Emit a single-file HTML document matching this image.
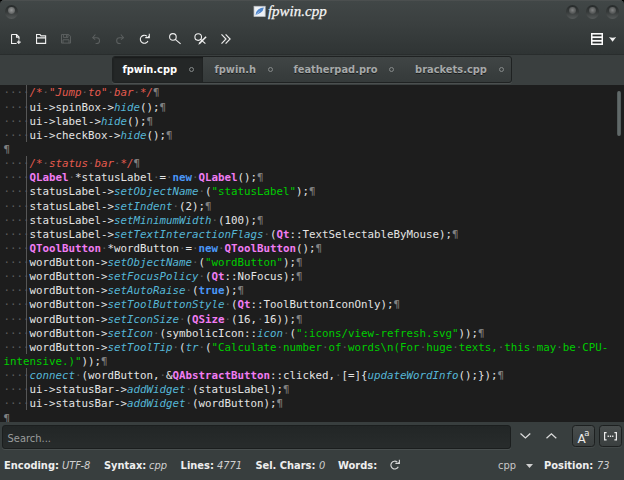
<!DOCTYPE html>
<html><head><meta charset="utf-8"><title>fpwin.cpp</title>
<style>
html,body{margin:0;padding:0;background:#000;}
body{width:624px;height:480px;position:relative;overflow:hidden;font-family:"DejaVu Sans","Liberation Sans",sans-serif;}
#win{position:absolute;left:0;top:0;width:624px;height:480px;border-radius:4.5px 4.5px 0 0;overflow:hidden;background:#383e3e;}
#head{position:absolute;left:0;top:0;width:624px;height:54.8px;background:linear-gradient(#414747 0px,#3b4040 22px,#2f3434 54.8px);}
#head:before{content:"";position:absolute;left:0;top:0;right:0;height:1px;background:#4b4f4f;}
#title{position:absolute;left:267.9px;top:2.6px;font-family:"Liberation Serif","DejaVu Serif",serif;font-style:italic;font-size:15px;color:#f6f6f6;line-height:16px;white-space:nowrap;-webkit-text-stroke:0.25px #f6f6f6;}
.wbtn{position:absolute;top:5px;width:13.4px;height:13.6px;border-radius:50%;background:linear-gradient(#292d2d 10%,#363a3a 50%,#565a5a 100%);}
.wbtn:after{content:"";position:absolute;left:3.3px;top:2.3px;width:6.8px;height:6.8px;border-radius:50%;background:radial-gradient(circle at 50% 45%,#969898 0,#747676 45%,#454949 100%);}
.wbtn.r:after{background:radial-gradient(circle at 50% 45%,#808282 0,#606262 45%,#3c4040 100%);}
#tabbar{position:absolute;left:0;top:54.4px;width:624px;height:30.8px;background:#3a3f3f;border-top:1px solid #292d2d;box-sizing:border-box;}
#tabs{position:absolute;left:111.9px;top:56px;width:400.6px;height:26.5px;background:linear-gradient(#404545,#353a3a);border-radius:3px;border:1px solid #1f2222;box-sizing:border-box;overflow:hidden;box-shadow:0 1px 0 rgba(255,255,255,0.085);}
.tab{position:absolute;top:-0.7px;height:26px;font-weight:bold;font-size:9.9px;line-height:27.4px;color:#a6a9a9;white-space:nowrap;text-shadow:0 1px 0.6px rgba(0,0,0,0.55);}
.tab.act{background:#242727;color:#fff;text-shadow:none;box-shadow:inset 0 1.5px 1.5px rgba(0,0,0,0.55);}
.dot{position:absolute;top:67.4px;width:3px;height:3px;border:1px solid #868a8a;border-radius:50%;}
#ed{position:absolute;left:0;top:85.2px;width:624px;height:336.4px;background:#1d1d1d;overflow:hidden;}
#code{position:absolute;left:3.4px;top:1.2px;margin:0;font-family:"DejaVu Sans Mono","Liberation Mono",monospace;font-size:10.8px;line-height:14.14px;color:#e4e4e4;white-space:pre;}
#code i{color:#55b6d6;}
#code .c{color:#e45a4e;font-style:italic;}
#code .t{color:#f17cf3;font-weight:bold;}
#code .k{color:#4a98f8;font-weight:bold;}
#code .s{color:#00cc00;}
#code .w{color:#5c5c5c;}
#code .p{color:#808080;}
.guide{position:absolute;left:26.1px;width:0.9px;background:#565656;}
#sb{position:absolute;left:616.8px;top:90.6px;width:4.2px;height:45.8px;background:linear-gradient(90deg,#4c5454,#687070 50%,#4c5454);border-radius:2.1px;}
#search{position:absolute;left:0;top:421.6px;width:624px;height:31px;background:#383e3e;}
#sin{position:absolute;left:1.6px;top:3.6px;width:509.8px;height:23.6px;box-sizing:border-box;border:1px solid #1b1e1e;border-radius:3px;background:linear-gradient(#222626,#282c2c);box-shadow:0 1px 0 rgba(255,255,255,0.09);font-size:9.9px;color:#9a9d9d;}
#sin span{position:absolute;left:5px;top:5.8px;line-height:14px;}
.sbtn{position:absolute;top:3.4px;height:22px;width:23.2px;box-sizing:border-box;border:1px solid #1d2020;border-radius:3.5px;background:linear-gradient(#484d4d,#3a3f3f);box-shadow:0 1px 0 rgba(255,255,255,0.06);}
#status{position:absolute;left:0;top:452px;width:624px;height:28px;background:#383e3e;font-size:9.9px;line-height:27.6px;color:#eee;white-space:nowrap;}
#status b{position:absolute;top:0;}
#status em{position:absolute;top:0;color:#d0d0d0;}
#status span{position:absolute;top:0;}
svg{position:absolute;overflow:visible;}
</style></head><body>
<div id="win">
<div id="head">
  <div class="wbtn" style="left:5px"></div>
  <div class="wbtn r" style="left:565.8px"></div>
  <div class="wbtn r" style="left:585.6px"></div>
  <div class="wbtn r" style="left:605.8px"></div>
  <svg style="left:254.4px;top:6.2px" width="11.2" height="10.8" viewBox="0 0 12 11"><rect x="0" y="0" width="12" height="11" fill="#eef1f5"/><rect x="0" y="0" width="12" height="11" fill="none" stroke="#b9bdc2" stroke-width="0.8"/><path d="M1.6 9.6 Q1.4 6 4.5 3.4 Q7.4 1.2 10.6 1.2 Q10 5 7 7 Q4.6 8.6 1.6 9.6Z" fill="#4f86cc"/><path d="M1.2 10 L6 5.4" stroke="#d9e4f2" stroke-width="0.6"/></svg>
  <div id="title">fpwin.cpp</div>
  <!-- toolbar icons -->
  <svg style="left:11px;top:34px" width="10" height="10" viewBox="0 0 10 10" fill="none" stroke="#f0f0f0" stroke-width="1.1"><path d="M0.55 0.55 H5.6 L8 3 V5.6 M0.55 0.55 V9.45 H5.6"/><path d="M5.5 0.6 V3.1 H8"/><path d="M7.8 6.2 V9.9 M5.9 8.05 H9.7" stroke-width="1.2"/></svg>
  <svg style="left:35.8px;top:34px" width="10.2" height="10" viewBox="0 0 10.2 10" fill="none" stroke="#f0f0f0" stroke-width="1.1"><path d="M0.55 9.4 V0.55 H4 L5 1.9 H9.65 V9.4 Z"/><path d="M0.55 3.9 H9.65"/></svg>
  <svg style="left:61px;top:34.2px" width="10" height="9.6" viewBox="0 0 10 9.6" fill="none" stroke="#5b5f5f" stroke-width="1"><path d="M0.5 0.5 H7.7 L9.5 2.3 V9.1 H0.5 Z"/><path d="M2.4 0.5 V3.4 H7 V0.5 M5.6 1 V3 M2 9 V5.8 H8 V9"/></svg>
  <svg style="left:92px;top:34px" width="8.2" height="10" viewBox="0 0 8.2 10" fill="none" stroke="#5b5f5f" stroke-width="1.05"><path d="M3.4 0.5 L0.7 3.7 L3.2 5.6"/><path d="M0.9 3.7 H4.6 A2.95 2.95 0 0 1 4.6 9.6 H3.6"/></svg>
  <svg style="left:116.2px;top:34px" width="8.2" height="10" viewBox="0 0 8.2 10" fill="none" stroke="#5b5f5f" stroke-width="1.05"><path d="M4.8 0.5 L7.5 3.7 L5 5.6"/><path d="M7.3 3.7 H3.6 A2.95 2.95 0 0 0 3.6 9.6 H4.6"/></svg>
  <svg style="left:140.4px;top:34px" width="10.4" height="10" viewBox="0 0 10.4 10" fill="none" stroke="#f0f0f0" stroke-width="1.1"><path d="M7.95 7 A4 4 0 1 1 6.9 2.25"/><path d="M9.3 -0.2 V3.6 H5.3" stroke-width="1.05"/><path d="M9.3 1.2 V3.6 H6.9 Z" fill="#f0f0f0" stroke="none"/></svg>
  <svg style="left:169px;top:33px" width="12" height="11.4" viewBox="0 0 12 11.4" fill="none" stroke="#f0f0f0" stroke-width="1.1"><circle cx="3.9" cy="3.95" r="3.3"/><path d="M6.3 6.3 L11.6 10.9"/></svg>
  <svg style="left:194px;top:33px" width="13" height="11.6" viewBox="0 0 13 11.6" fill="none" stroke="#f0f0f0" stroke-width="1.1"><circle cx="4.2" cy="4.05" r="3.3"/><path d="M6.6 6.4 L11.4 10.6"/><path d="M4.3 11.7 L5.2 9.6 L11.6 3.2 L12.6 4.2 L6.3 10.7 Z" fill="#f0f0f0" stroke="none"/></svg>
  <svg style="left:221px;top:34px" width="9.6" height="10" viewBox="0 0 9.6 10" fill="none" stroke="#e8e8e8" stroke-width="1.2"><path d="M0.5 0.4 L5 5 L0.5 9.6 M4.6 0.4 L9.1 5 L4.6 9.6"/></svg>
  <svg style="left:591.3px;top:33px" width="12" height="12" viewBox="0 0 12 12"><rect x="0" y="0" width="12" height="12" fill="#fafafa"/><rect x="1.5" y="1.6" width="9" height="1.7" fill="#2c3030"/><rect x="1.5" y="5.1" width="9" height="1.8" fill="#2c3030"/><rect x="1.5" y="8.7" width="9" height="1.7" fill="#2c3030"/></svg>
  <svg style="left:608.6px;top:36.9px" width="7.2" height="4.8" viewBox="0 0 7.2 4.8"><path d="M0 0 Q3.6 1.6 7.2 0 L3.6 4.8 Z" fill="#f0f0f0"/></svg>
</div>
<div id="tabbar"></div>
<div id="tabs">
  <div class="tab act" style="left:0;width:89.8px;padding-left:9.5px;box-sizing:border-box;">fpwin.cpp</div>
  <div class="tab" style="left:101.5px">fpwin.h</div>
  <div class="tab" style="left:180.5px">featherpad.pro</div>
  <div class="tab" style="left:302.2px">brackets.cpp</div>
</div>
<div class="dot" style="left:189.4px"></div>
<div class="dot" style="left:268.3px"></div>
<div class="dot" style="left:389px"></div>
<div class="dot" style="left:498.8px"></div>
<div id="ed">
<div class="guide" style="top:0.30px;height:56.50px"></div><div class="guide" style="top:70.92px;height:197.75px"></div><div class="guide" style="top:282.80px;height:42.38px"></div>
<pre id="code"><span class="w">····</span><span class="c">/*<span class="w">·</span>"Jump<span class="w">·</span>to"<span class="w">·</span>bar<span class="w">·</span>*/</span><span class="p">¶</span>
<span class="w">····</span>ui-&gt;spinBox-&gt;<i>hide</i>();<span class="p">¶</span>
<span class="w">····</span>ui-&gt;label-&gt;<i>hide</i>();<span class="p">¶</span>
<span class="w">····</span>ui-&gt;checkBox-&gt;<i>hide</i>();<span class="p">¶</span>
<span class="p">¶</span>
<span class="w">····</span><span class="c">/*<span class="w">·</span>status<span class="w">·</span>bar<span class="w">·</span>*/</span><span class="p">¶</span>
<span class="w">····</span><span class="t">QLabel</span><span class="w">·</span>*statusLabel<span class="w">·</span>=<span class="w">·</span><span class="k">new</span><span class="w">·</span><span class="t">QLabel</span>();<span class="p">¶</span>
<span class="w">····</span>statusLabel-&gt;<i>setObjectName</i><span class="w">·</span>(<span class="s">"statusLabel"</span>);<span class="p">¶</span>
<span class="w">····</span>statusLabel-&gt;<i>setIndent</i><span class="w">·</span>(2);<span class="p">¶</span>
<span class="w">····</span>statusLabel-&gt;<i>setMinimumWidth</i><span class="w">·</span>(100);<span class="p">¶</span>
<span class="w">····</span>statusLabel-&gt;<i>setTextInteractionFlags</i><span class="w">·</span>(<span class="t">Qt</span>::TextSelectableByMouse);<span class="p">¶</span>
<span class="w">····</span><span class="t">QToolButton</span><span class="w">·</span>*wordButton<span class="w">·</span>=<span class="w">·</span><span class="k">new</span><span class="w">·</span><span class="t">QToolButton</span>();<span class="p">¶</span>
<span class="w">····</span>wordButton-&gt;<i>setObjectName</i><span class="w">·</span>(<span class="s">"wordButton"</span>);<span class="p">¶</span>
<span class="w">····</span>wordButton-&gt;<i>setFocusPolicy</i><span class="w">·</span>(<span class="t">Qt</span>::NoFocus);<span class="p">¶</span>
<span class="w">····</span>wordButton-&gt;<i>setAutoRaise</i><span class="w">·</span>(<span class="k">true</span>);<span class="p">¶</span>
<span class="w">····</span>wordButton-&gt;<i>setToolButtonStyle</i><span class="w">·</span>(<span class="t">Qt</span>::ToolButtonIconOnly);<span class="p">¶</span>
<span class="w">····</span>wordButton-&gt;<i>setIconSize</i><span class="w">·</span>(<span class="t">QSize</span><span class="w">·</span>(16,<span class="w">·</span>16));<span class="p">¶</span>
<span class="w">····</span>wordButton-&gt;<i>setIcon</i><span class="w">·</span>(symbolicIcon::<i>icon</i><span class="w">·</span>(<span class="s">":icons/view-refresh.svg"</span>));<span class="p">¶</span>
<span class="w">····</span>wordButton-&gt;<i>setToolTip</i><span class="w">·</span>(<i>tr</i><span class="w">·</span>(<span class="s">"Calculate<span class="w">·</span>number<span class="w">·</span>of<span class="w">·</span>words\n(For<span class="w">·</span>huge<span class="w">·</span>texts,<span class="w">·</span>this<span class="w">·</span>may<span class="w">·</span>be<span class="w">·</span>CPU-</span>
<span class="s">intensive.)"</span>));<span class="p">¶</span>
<span class="w">····</span><i>connect</i><span class="w">·</span>(wordButton,<span class="w">·</span>&amp;<span class="t">QAbstractButton</span>::clicked,<span class="w">·</span>[=]{<i>updateWordInfo</i>();});<span class="p">¶</span>
<span class="w">····</span>ui-&gt;statusBar-&gt;<i>addWidget</i><span class="w">·</span>(statusLabel);<span class="p">¶</span>
<span class="w">····</span>ui-&gt;statusBar-&gt;<i>addWidget</i><span class="w">·</span>(wordButton);<span class="p">¶</span>
<span class="p">¶</span></pre>
</div>
<div id="sb"></div>
<div id="search">
  <div id="sin"><span>Search...</span></div>
  <svg style="left:519.8px;top:11.8px" width="10.8" height="5.8" viewBox="0 0 10.8 5.8" fill="none" stroke="#dcdcdc" stroke-width="1.25"><path d="M0.5 0.5 L5.4 5 L10.3 0.5"/></svg>
  <svg style="left:546.2px;top:11.8px" width="10.8" height="5.8" viewBox="0 0 10.8 5.8" fill="none" stroke="#dcdcdc" stroke-width="1.25"><path d="M0.5 5.3 L5.4 0.8 L10.3 5.3"/></svg>
  <div class="sbtn" style="left:572.2px;width:23px"></div>
  <div class="sbtn" style="left:598.5px;width:23.2px"></div>
  <div style="position:absolute;left:577.4px;top:9.3px;font-size:12px;line-height:16px;color:#ececec;">A</div>
  <div style="position:absolute;left:584.2px;top:7.6px;font-size:8.5px;line-height:9px;color:#ececec;">a</div>
  <svg style="left:603.5px;top:10.9px" width="13" height="8.4" viewBox="0 0 13 8.4" fill="none" stroke="#ececec" stroke-width="1.2"><path d="M2.6 0.6 H0.6 V7.8 H2.6 M10.4 0.6 H12.4 V7.8 H10.4"/><path d="M3.6 4.2 H4.9 M5.85 4.2 H7.15 M8.1 4.2 H9.4" stroke-width="1.4"/></svg>
</div>
<div id="status">
  <b style="left:4px">Encoding:</b><em style="left:62px">UTF-8</em>
  <b style="left:104px">Syntax:</b><em style="left:149px">cpp</em>
  <b style="left:180.6px">Lines:</b><em style="left:217px">4771</em>
  <b style="left:255.4px">Sel. Chars:</b><em style="left:319px">0</em>
  <b style="left:338px">Words:</b>
  <svg style="left:389.6px;top:7px" width="11" height="11" viewBox="389.6 7 11 11" fill="none" stroke="#d6d6d6" stroke-width="1.15"><path d="M397.9 14.75 A3.9 3.9 0 1 1 396.9 10.1"/><path d="M399 7.8 V11.4 H395" stroke-width="1.1"/><path d="M399 9.4 V11.4 H396.9 Z" fill="#d6d6d6" stroke="none"/></svg>
  <span style="left:498px;color:#c8c8c8">cpp</span>
  <svg style="left:526px;top:12px" width="7" height="4" viewBox="0 0 7 4"><path d="M0 0 H7 L3.5 4 Z" fill="#d0d0d0"/></svg>
  <b style="left:544px">Position:</b><em style="left:597px">73</em>
</div>
</div>
</body></html>
